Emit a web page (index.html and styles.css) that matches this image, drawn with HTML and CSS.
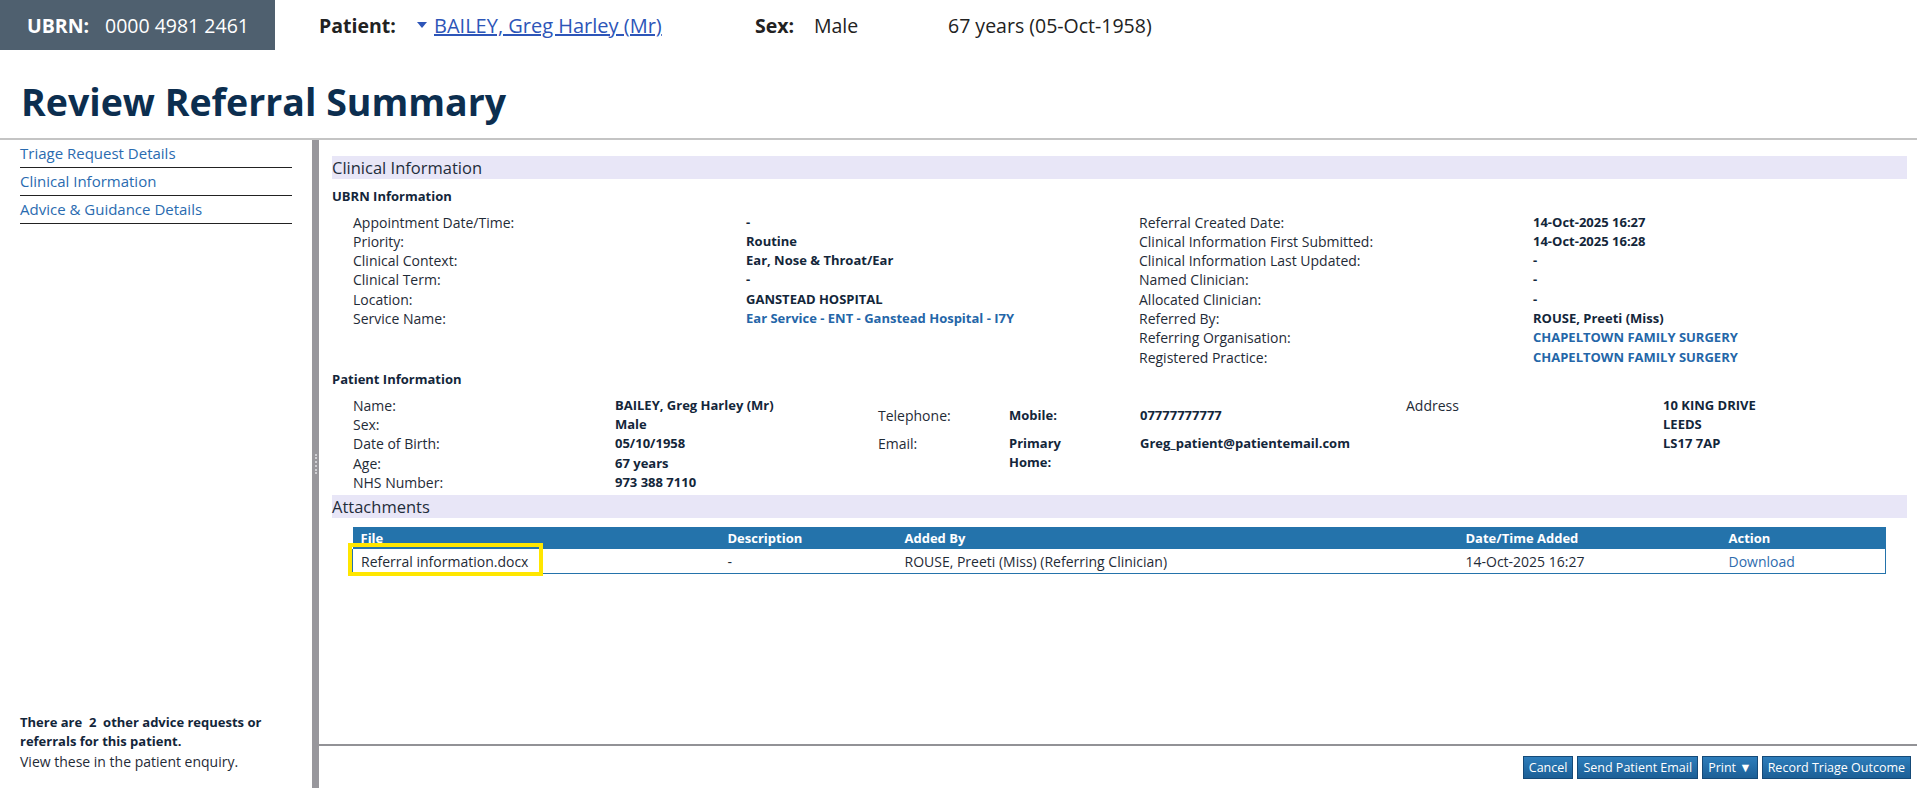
FILE: index.html
```
<!DOCTYPE html>
<html>
<head>
<link rel="stylesheet" href="styles.css">
</head>
<body>

<div class="topbar">
  <div class="ubrn"><span class="ubrn-label">UBRN:</span><span>0000 4981 2461</span></div>
  <div class="patient">
    <span class="hdr-label patient-label">Patient:</span>
    <a class="patient-link" href="#"><span class="caret"></span>BAILEY, Greg Harley (Mr)</a>
  </div>
  <div class="sex"><span class="hdr-label sex-label">Sex:</span>Male</div>
  <div class="age">67 years (05-Oct-1958)</div>
</div>

<h1 class="page-title">Review Referral Summary</h1>

<div class="layout">
  <div class="sidebar">
    <ul class="side-nav">
      <li><a href="#">Triage Request Details</a></li>
      <li><a href="#">Clinical Information</a></li>
      <li><a href="#">Advice &amp; Guidance Details</a></li>
    </ul>
    <div class="side-note">
      <div class="note-bold">There are &nbsp;2&nbsp; other advice requests or referrals for this patient.</div>
      <div>View these in the patient enquiry.</div>
    </div>
  </div>

  <div class="splitter"><span class="grip"></span></div>

  <div class="main">
    <div class="content">
      <div class="section-head">Clinical Information</div>

      <h3 class="sub first">UBRN Information</h3>
      <div class="kv-cols">
        <div class="kv kv-left">
          <span class="k">Appointment Date/Time:</span><span class="v">-</span>
          <span class="k">Priority:</span><span class="v">Routine</span>
          <span class="k">Clinical Context:</span><span class="v">Ear, Nose &amp; Throat/Ear</span>
          <span class="k">Clinical Term:</span><span class="v">-</span>
          <span class="k">Location:</span><span class="v">GANSTEAD HOSPITAL</span>
          <span class="k">Service Name:</span><a class="v link" href="#">Ear Service - ENT - Ganstead Hospital - I7Y</a>
        </div>
        <div class="kv kv-right">
          <span class="k">Referral Created Date:</span><span class="v">14-Oct-2025 16:27</span>
          <span class="k">Clinical Information First Submitted:</span><span class="v">14-Oct-2025 16:28</span>
          <span class="k">Clinical Information Last Updated:</span><span class="v">-</span>
          <span class="k">Named Clinician:</span><span class="v">-</span>
          <span class="k">Allocated Clinician:</span><span class="v">-</span>
          <span class="k">Referred By:</span><span class="v">ROUSE, Preeti (Miss)</span>
          <span class="k">Referring Organisation:</span><a class="v link" href="#">CHAPELTOWN FAMILY SURGERY</a>
          <span class="k">Registered Practice:</span><a class="v link" href="#">CHAPELTOWN FAMILY SURGERY</a>
        </div>
      </div>

      <h3 class="sub">Patient Information</h3>
      <div class="kv-cols">
        <div class="kv kv-pat">
          <span class="k">Name:</span><span class="v">BAILEY, Greg Harley (Mr)</span>
          <span class="k">Sex:</span><span class="v">Male</span>
          <span class="k">Date of Birth:</span><span class="v">05/10/1958</span>
          <span class="k">Age:</span><span class="v">67 years</span>
          <span class="k">NHS Number:</span><span class="v">973 388 7110</span>
        </div>
        <div class="phone">
          <span class="k">Telephone:</span><span class="v phone-type">Mobile:</span><span class="v">07777777777</span>
          <span class="k">Email:</span><span class="v phone-type">Primary Home:</span><span class="v">Greg_patient@patientemail.com</span>
        </div>
        <div class="kv address">
          <span class="k">Address</span><span class="v">10 KING DRIVE<br>LEEDS<br>LS17 7AP</span>
        </div>
      </div>

      <div class="section-head attach-head">Attachments</div>
      <table class="attachments">
        <colgroup>
          <col style="width:367px">
          <col style="width:177px">
          <col style="width:561px">
          <col style="width:263px">
          <col style="width:165px">
        </colgroup>
        <thead>
          <tr><th>File</th><th>Description</th><th>Added By</th><th>Date/Time Added</th><th>Action</th></tr>
        </thead>
        <tbody>
          <tr>
            <td class="file">Referral information.docx<span class="highlight"></span></td>
            <td>-</td>
            <td>ROUSE, Preeti (Miss) (Referring Clinician)</td>
            <td>14-Oct-2025 16:27</td>
            <td><a class="link-plain" href="#">Download</a></td>
          </tr>
        </tbody>
      </table>
    </div>

    <div class="footer">
      <button class="btn">Cancel</button>
      <button class="btn">Send Patient Email</button>
      <button class="btn">Print &#9660;</button>
      <button class="btn">Record Triage Outcome</button>
    </div>
  </div>
</div>

</body>
</html>
```

FILE: styles.css
```
* {box-sizing: border-box;}
body {
  margin: 0;
  font-family: "Open Sans", "Noto Sans", sans-serif;
  color: #1f2b37;
  overflow: hidden;
}
a {text-decoration: none;}

/* top patient banner */
.topbar {
  display: flex;
  align-items: center;
  height: 50px;
  font-size: 19.5px;
  color: #222;
}
.ubrn {
  width: 275px;
  height: 50px;
  display: flex;
  align-items: center;
  padding-left: 27px;
  background: #4f606f;
  color: #fff;
}
.ubrn-label {
  font-weight: bold;
  width: 78px;
}
.patient {
  margin-left: 44px;
  width: 436px;
  display: flex;
  align-items: center;
}
.hdr-label {font-weight: bold;}
.patient-label {width: 98px;}
.sex-label {display: inline-block; width: 59px;}
.patient-link {
  color: #2d55b8;
  font-size: 20px;
  text-decoration: underline;
  display: flex;
  align-items: center;
}
.caret {
  width: 0;
  height: 0;
  border-left: 5.5px solid transparent;
  border-right: 5.5px solid transparent;
  border-top: 6px solid #2d55b8;
  margin-right: 7px;
}
.sex {width: 193px;}

.page-title {
  margin: 29px 0 13px 21px;
  font-size: 37.5px;
  line-height: 46px;
  font-weight: bold;
  color: #0c2e4f;
}

/* page body */
.layout {
  display: flex;
  height: 650px;
  border-top: 2px solid #c4c4c4;
}
.sidebar {
  width: 313px;
  display: flex;
  flex-direction: column;
  padding: 0 20px 17px 20px;
}
.side-nav {
  list-style-type: none;
  margin: 0;
  padding: 0;
}
.side-nav li {
  font-size: 15px;
  line-height: 20px;
  padding: 3px 0 4px;
  border-bottom: 1px solid #222;
}
.side-nav a {color: #2a6bb0;}
.side-note {
  margin-top: auto;
  font-size: 14px;
  line-height: 19.5px;
  color: #1f2b37;
}
.note-bold {
  font-size: 13px;
  font-weight: bold;
  color: #13263a;
  padding-right: 20px;
}

.splitter {
  width: 7px;
  background: #98979c;
  display: flex;
  align-items: center;
  justify-content: center;
}
.grip {
  height: 20px;
  border-left: 2px dotted #cfcfd3;
}

.main {
  flex: 1;
  display: flex;
  flex-direction: column;
}
.content {
  flex: 1;
  padding: 16px 10px 0 13px;
  overflow: hidden;
}
.section-head {
  background: #e8e6f7;
  height: 23px;
  line-height: 23px;
  font-size: 16.5px;
  color: #1f2d3b;
}
.sub {
  margin: 3px 0 7px;
  font-size: 13px;
  line-height: 19px;
  color: #13263a;
}
.sub.first {margin-top: 7.5px;}

.kv-cols {
  display: flex;
  padding-left: 21px;
  font-size: 14px;
  line-height: 19.3px;
}
.kv {display: grid; align-content: start;}
.kv-left {grid-template-columns: 393px 393px;}
.kv-right {grid-template-columns: 394px auto;}
.kv-pat {grid-template-columns: 262px 263px;}
.address {grid-template-columns: 257px auto;}
.k {color: #1f2b37;}
.v {
  font-weight: bold;
  font-size: 13px;
  color: #13263a;
}
.v.link {color: #2466a8;}

.phone {
  display: grid;
  grid-template-columns: 131px 131px 266px;
  align-content: start;
  row-gap: 9px;
  padding-top: 10px;
}
.phone-type {max-width: 70px;}

.attach-head {margin-top: 3px;}

.attachments {
  margin: 9px 21px 0 20px;
  width: 1533px;
  table-layout: fixed;
  border-collapse: collapse;
  font-size: 14px;
}
.attachments th {
  background: #2473ab;
  color: #fff;
  font-size: 13px;
  text-align: left;
  height: 22px;
  padding: 0 8px;
}
.attachments td {
  height: 24px;
  padding: 0 8px;
  border-bottom: 1px solid #2473ab;
  color: #1f2b37;
}
.attachments td:first-child {border-left: 1px solid #2473ab;}
.attachments td:last-child {border-right: 1px solid #2473ab;}
.attachments .file {position: relative;}
.highlight {
  position: absolute;
  left: -5px;
  top: -6px;
  width: 195px;
  height: 33px;
  border: 4px solid #ffe600;
}
.link-plain {color: #2f6cae;}

/* action buttons */
.footer {
  border-top: 2px solid #929296;
  padding: 10px 6px 9px;
  display: flex;
  justify-content: flex-end;
  gap: 4px;
}
.btn {
  height: 23px;
  padding: 0 5px;
  font-family: "Open Sans", "Noto Sans", sans-serif;
  font-size: 12.5px;
  color: #fff;
  background: linear-gradient(#2d7dbb, #1c5f96);
  border: 1px solid #154a78;
  border-radius: 0;
}
```
